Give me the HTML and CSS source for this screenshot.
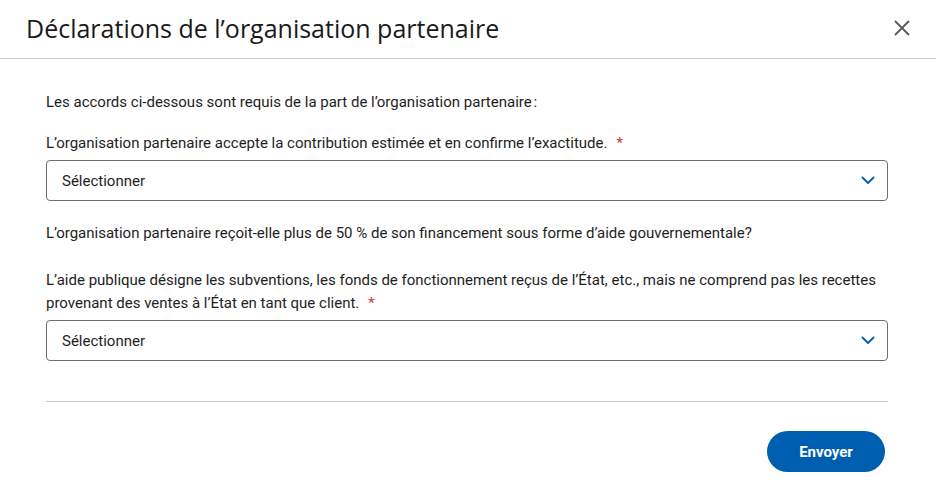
FILE: index.html
```html
<!DOCTYPE html>
<html lang="fr">
<head>
<meta charset="utf-8">
<link rel="stylesheet" href="styles.css">
</head>
<body>
<div class="modal">
  <header class="modal-header">
    <h1 class="title">Déclarations de l’organisation partenaire</h1>
    <button class="close" aria-label="Fermer">
      <svg width="18" height="18" viewBox="0 0 18 18"><path d="M2 2 L16 16 M16 2 L2 16" stroke="#5a5a5a" stroke-width="1.8" fill="none"/></svg>
    </button>
  </header>
  <main class="modal-body">
    <p class="intro">Les accords ci-dessous sont requis de la part de l’organisation partenaire&#8239;:</p>
    <div class="field">
      <label class="label">L’organisation partenaire accepte la contribution estimée et en confirme l’exactitude.<span class="req">*</span></label>
      <div class="select"><span>Sélectionner</span>
        <svg class="chev" width="14" height="9" viewBox="0 0 14 9"><path d="M1.5 1.5 L7 7 L12.5 1.5" stroke="#0a62b8" stroke-width="2" fill="none" stroke-linecap="round" stroke-linejoin="round"/></svg>
      </div>
    </div>
    <p class="question">L’organisation partenaire reçoit-elle plus de 50 % de son financement sous forme d’aide gouvernementale?</p>
    <div class="field">
      <label class="label two">L’aide publique désigne les subventions, les fonds de fonctionnement reçus de l’État, etc., mais ne comprend pas les recettes provenant des ventes à l’État en tant que client.<span class="req">*</span></label>
      <div class="select"><span>Sélectionner</span>
        <svg class="chev" width="14" height="9" viewBox="0 0 14 9"><path d="M1.5 1.5 L7 7 L12.5 1.5" stroke="#0a62b8" stroke-width="2" fill="none" stroke-linecap="round" stroke-linejoin="round"/></svg>
      </div>
    </div>
    <hr class="divider">
    <div class="actions">
      <button class="submit">Envoyer</button>
    </div>
  </main>
</div>
</body>
</html>
```
FILE: styles.css
```css
* { box-sizing: border-box; }
html, body { margin: 0; padding: 0; background: #fff; }
body {
  font-family: Roboto, "Liberation Sans", sans-serif;
  color: #1e1e1e;
  width: 936px;
  height: 504px;
  overflow: hidden;
}
.modal-header {
  height: 59px;
  border-bottom: 1px solid #c9c9c9;
  display: flex;
  align-items: center;
  justify-content: space-between;
  padding: 0 25px 0 26px;
}
.title {
  margin: 0;
  font-family: "Open Sans", sans-serif;
  font-weight: 400;
  font-size: 25px;
  color: #1a1a1a;
  padding-bottom: 2px;
}
.close {
  border: 0;
  background: none;
  padding: 0;
  width: 18px;
  height: 18px;
  display: flex;
  margin-top: -2px;
}
.modal-body {
  padding: 32px 48px 0 46px;
}
.intro, .question, .label {
  font-size: 15px;
  line-height: 23px;
  margin: 0;
}
.intro { margin-bottom: 18px; }
.label { display: block; margin-bottom: 5px; }
.req { color: #c8402b; margin-left: 9px; }
.select {
  height: 41px;
  border: 1px solid #6e6e6e;
  border-radius: 4px;
  display: flex;
  align-items: center;
  justify-content: space-between;
  padding: 0 12px 0 15px;
  font-size: 15px;
}
.field + .question { margin-top: 21px; margin-bottom: 24px; }
.divider {
  border: 0;
  border-top: 1px solid #c9c9c9;
  margin: 40px 0 29px;
}
.actions { display: flex; justify-content: flex-end; padding-right: 3px; }
.submit {
  width: 118px;
  height: 41px;
  border: 0;
  border-radius: 21px;
  background: #005eb0;
  color: #fff;
  font-family: Roboto, sans-serif;
  font-weight: 700;
  font-size: 15px;
}
```
